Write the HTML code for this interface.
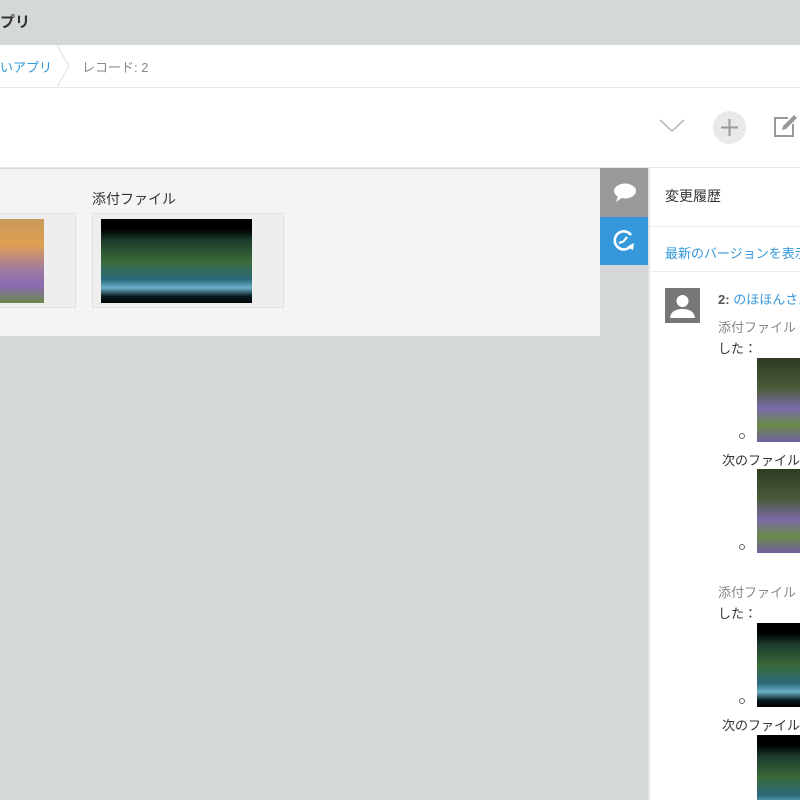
<!DOCTYPE html>
<html><head><meta charset="utf-8"><style>
*{margin:0;padding:0;box-sizing:border-box}
html,body{width:800px;height:800px;overflow:hidden}
body{background:#d5d8d9;font-family:"Liberation Sans","Noto Sans CJK JP",sans-serif;position:relative;font-size:13px;color:#333}
.a{position:absolute}
.forest{background:linear-gradient(180deg,#2e3a22 0%,#4a5a38 35%,#7a6aa8 60%,#6a8a4a 80%,#7060a0 100%)}
.falls{background:linear-gradient(180deg,#000 0%,#000 12%,#1a3a2a 25%,#3a6a3a 50%,#2a6a7a 72%,#6ab0c8 82%,#0a1a22 92%,#000 100%)}
</style></head><body>
<div class="a" style="left:0;top:11px;font-size:15px;font-weight:bold;color:#333">プリ</div>
<div class="a" style="left:0;top:45px;width:800px;height:43px;background:#fff;border-bottom:1px solid #e8e8e8"></div>
<div class="a" style="left:0;top:57px;color:#3498db;font-size:13px">いアプリ</div>
<svg class="a" style="left:56px;top:45px" width="16" height="42"><path d="M1 0 L13 21 L1 42" fill="none" stroke="#e3e3e3" stroke-width="1.2"/></svg>
<div class="a" style="left:82px;top:57px;color:#888;font-size:13px">レコード: 2</div>
<div class="a" style="left:0;top:88px;width:800px;height:80px;background:#fff;border-bottom:1px solid #e6e6e6"></div>
<svg class="a" style="left:658px;top:118px" width="28" height="16"><path d="M2 2 L14 13 L26 2" fill="none" stroke="#bbb" stroke-width="1.6"/></svg>
<div class="a" style="left:713px;top:111px;width:33px;height:33px;border-radius:50%;background:#e9e9e9"></div>
<svg class="a" style="left:713px;top:111px" width="33" height="33"><path d="M16.5 8 V25 M8 16.5 H25" stroke="#999" stroke-width="2"/></svg>
<svg class="a" style="left:772px;top:114px" width="28" height="28"><path d="M16 4 H3 V22 H21 V10" fill="none" stroke="#999" stroke-width="2"/><path d="M10 16 L11 12 L22 1 L25 4 L14 15 Z" fill="#999"/></svg>
<div class="a" style="left:0;top:169px;width:600px;height:167px;background:#f4f4f4"></div>
<div class="a" style="left:92px;top:189px;font-size:14px;color:#333">添付ファイル</div>
<div class="a" style="left:-1px;top:213px;width:77px;height:95px;background:#eee;border:1px solid #e0e0e0"></div>
<div class="a" style="left:0;top:219px;width:44px;height:84px;background:linear-gradient(180deg,#c89a5a 0%,#e0a050 30%,#a07aa0 60%,#8a6ab0 80%,#6a8a4a 100%)"></div>
<div class="a" style="left:92px;top:213px;width:192px;height:95px;background:#eee;border:1px solid #e0e0e0"></div>
<div class="a falls" style="left:101px;top:219px;width:151px;height:84px"></div>
<div class="a" style="left:600px;top:168px;width:48px;height:49px;background:#9a9a9a"></div>
<svg class="a" style="left:612px;top:181px" width="26" height="24"><ellipse cx="13" cy="10" rx="11" ry="7.5" fill="#fff"/><path d="M6 15 L4 21 L11 16 Z" fill="#fff"/></svg>
<div class="a" style="left:600px;top:217px;width:48px;height:48px;background:#3498db"></div>
<svg class="a" style="left:611px;top:228px" width="26" height="26"><path d="M20.5 17 A9 9 0 1 1 20 7" fill="none" stroke="#fff" stroke-width="2.6"/><path d="M12.5 13.5 L8 15 M12.5 13.5 L16 9" stroke="#fff" stroke-width="2.2"/><path d="M16 19 L23 15 L22 22 Z" fill="#fff"/></svg>
<div class="a" style="left:648px;top:168px;width:152px;height:632px;background:#fff;border-left:2px solid #e4e4e4;overflow:hidden">
<div class="a" style="left:15px;top:18px;font-size:14px;color:#333">変更履歴</div>
<div class="a" style="left:0;top:58px;width:150px;height:1px;background:#ebebeb"></div>
<div class="a" style="left:15px;top:75px;font-size:13px;color:#3498db;white-space:nowrap">最新のバージョンを表示</div>
<div class="a" style="left:0;top:103px;width:150px;height:1px;background:#ebebeb"></div>
<div class="a" style="left:15px;top:120px;width:35px;height:35px;background:#777;overflow:hidden">
<svg width="35" height="35"><circle cx="17.5" cy="13" r="6" fill="#fff"/><path d="M5 30 Q6 21 17.5 21 Q29 21 30 30 Z" fill="#fff"/></svg></div>
<div class="a" style="left:68px;top:121px;font-size:13px;white-space:nowrap"><b style="color:#555">2:</b> <span style="color:#3498db">のほほんさん</span></div>
<div class="a" style="left:68px;top:149px;font-size:13px;color:#888;white-space:nowrap">添付ファイル</div>
<div class="a" style="left:68px;top:170px;font-size:13px;color:#333">した：</div>
<div class="a forest" style="left:107px;top:190px;width:50px;height:84px"></div>
<div class="a" style="left:89px;top:265px;width:6px;height:6px;border:1px solid #666;border-radius:50%"></div>
<div class="a" style="left:72px;top:282px;font-size:13px;color:#333;white-space:nowrap">次のファイル</div>
<div class="a forest" style="left:107px;top:301px;width:50px;height:84px"></div>
<div class="a" style="left:89px;top:376px;width:6px;height:6px;border:1px solid #666;border-radius:50%"></div>
<div class="a" style="left:68px;top:414px;font-size:13px;color:#888;white-space:nowrap">添付ファイル</div>
<div class="a" style="left:68px;top:435px;font-size:13px;color:#333">した：</div>
<div class="a falls" style="left:107px;top:455px;width:80px;height:84px"></div>
<div class="a" style="left:89px;top:530px;width:6px;height:6px;border:1px solid #666;border-radius:50%"></div>
<div class="a" style="left:72px;top:547px;font-size:13px;color:#333;white-space:nowrap">次のファイル</div>
<div class="a falls" style="left:107px;top:567px;width:80px;height:84px"></div>
</div>
</body></html>
